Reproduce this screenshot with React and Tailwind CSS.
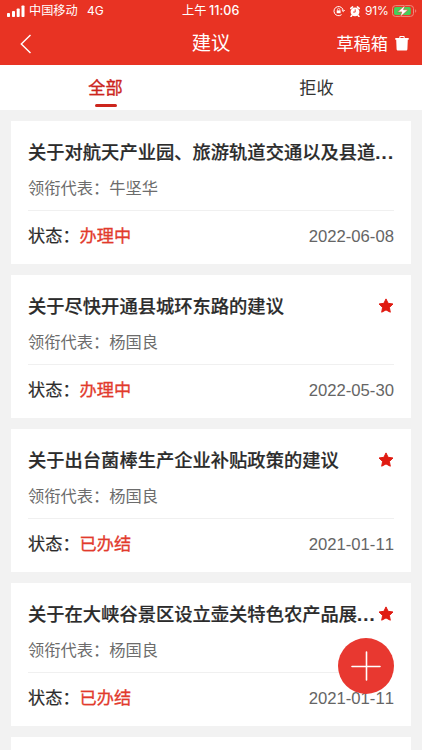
import React from "react";

const items = [
  { title: "关于对航天产业园、旅游轨道交通以及县道", cut: true, who: "牛坚华", status: "办理中", date: "2022-06-08", star: false },
  { title: "关于尽快开通县城环东路的建议", cut: false, who: "杨国良", status: "办理中", date: "2022-05-30", star: true },
  { title: "关于出台菌棒生产企业补贴政策的建议", cut: false, who: "杨国良", status: "已办结", date: "2021-01-11", star: true },
  { title: "关于在大峡谷景区设立壶关特色农产品展", cut: true, who: "杨国良", status: "已办结", date: "2021-01-11", star: true },
];

function Star() {
  return (
    <svg className="mb-[3px] ml-auto h-[15px] w-[16px] shrink-0" viewBox="0 0 16 15" fill="#e01b12" stroke="#e01b12" strokeWidth="1" strokeLinejoin="round">
      <path d="M8 .9l2.1 4.4 4.9.7-3.6 3.4.9 4.8L8 11.9l-4.3 2.3.9-4.8L1 6l4.9-.7z" />
    </svg>
  );
}

function StatusBar() {
  return (
    <div className="flex h-[22px] items-center pl-[7px] pr-[5px] text-[12px] leading-[22px]">
      <svg className="h-[12px] w-[18px]" viewBox="0 0 18 12" fill="#fff">
        <rect x="0" y="8" width="3" height="4" rx="0.8" />
        <rect x="5" y="6" width="3" height="6" rx="0.8" />
        <rect x="9.7" y="3.5" width="3" height="8.5" rx="0.8" />
        <rect x="14.5" y="0.5" width="3" height="11.5" rx="0.8" />
      </svg>
      <span className="ml-[4px] w-[58px] text-[12.2px]">中国移动</span>
      <span className="w-[94px] font-['Inter'] text-[12px]">4G</span>
      <span className="flex w-[62px] whitespace-nowrap pl-px text-[12.2px]">上午<span className="ml-[2.5px] font-['Inter'] text-[12.5px] font-medium tracking-[0.1px]">11:06</span></span>
      <div className="ml-auto flex items-center">
        <svg className="h-[12px] w-[12px]" viewBox="0 0 12 12" fill="none" stroke="#fff" strokeWidth="1">
          <path d="M8.6 9.6A4.6 4.6 0 1 1 10.2 6M8.8 5.2l1.5 1.4 1.4-1.5" />
          <rect x="3.7" y="5.4" width="3.9" height="2.8" fill="#fff" stroke="none" />
          <path d="M4.5 5.6V4.5a1.15 1.15 0 0 1 2.3 0v1.1" strokeWidth="0.7" />
        </svg>
        <svg className="ml-[5px] h-[11px] w-[10px]" viewBox="0 0 10 11">
          <path d="M.8 2.4L2.6.9M9.2 2.4L7.4.9M2 9.2l-1 1.2M8 9.2l1 1.2" stroke="#fff" strokeWidth="1.5" strokeLinecap="round" />
          <circle cx="5" cy="5.8" r="4.4" fill="#fff" />
          <path d="M5.2 3.3v2.8H3.1" fill="none" stroke="#e83323" strokeWidth="0.9" />
        </svg>
        <span className="ml-[5px] w-[24px] font-['Inter'] text-[12px] tracking-[-0.1px]">91%</span>
        <svg className="ml-[3px] h-[12px] w-[25px]" viewBox="0 0 25 12">
          <rect x="0.5" y="0.6" width="21" height="10.8" rx="3" fill="none" stroke="#f08a7f" />
          <rect x="2" y="2.1" width="16.8" height="7.8" rx="1.6" fill="#45cf5a" />
          <path d="M23.2 4.2c1.4.5 1.4 3 0 3.6z" fill="#f08a7f" />
          <path d="M13 .2L5.6 6.9h4.2L8.2 11.9l7.8-7.1h-4.5z" fill="#fff" stroke="#e83323" strokeWidth="0.5" />
        </svg>
      </div>
    </div>
  );
}

function Card({ item }) {
  return (
    <article className="h-[143px] shrink-0 bg-white px-[17px]">
      <div className="flex h-[58px] items-center pt-[5px] text-[#2b2b2b]">
        <h2 className="whitespace-nowrap text-[18.3px] font-medium leading-[26px] [-webkit-text-stroke:0.2px_#2b2b2b]">
          {item.title}
          {item.cut && <span className="font-bold tracking-[1.2px]">...</span>}
        </h2>
        {item.star && <Star />}
      </div>
      <p className="h-[32px] border-b border-[#f0f0f0] text-[16.25px] leading-[18px] text-[#6c6c6c]">领衔代表：{item.who}</p>
      <div className="flex h-[52px] items-center text-[17.2px]">
        <span className="text-[#2b2b2b] [-webkit-text-stroke:0.2px_#2b2b2b]">状态：</span>
        <span className="text-[#e23a2c] [-webkit-text-stroke:0.3px_#e23a2c]">{item.status}</span>
        <time className="ml-auto text-[16.7px] text-[#656565] [font-kerning:none]">{item.date}</time>
      </div>
    </article>
  );
}

export default function App() {
  return (
    <div className="relative flex h-[750px] w-[422px] flex-col overflow-hidden bg-[#f2f2f2] font-['Liberation_Sans','Noto_Sans_CJK_SC',sans-serif]">
      <header className="h-[65px] shrink-0 bg-[#e83323] text-white">
        <StatusBar />
        <div className="grid h-[43px] grid-cols-[1fr_auto_1fr] items-center pl-[13px] pr-[13px]">
          <svg className="ml-[7px] h-[20px] w-[12px]" viewBox="0 0 12 20" fill="none" stroke="#fff" strokeWidth="1.4">
            <path d="M10.5 1L1.3 10l9.2 9" />
          </svg>
          <h1 className="pt-[2px] text-[19.3px]">建议</h1>
          <div className="flex items-center justify-end pt-[2px] text-[17.2px]">
            草稿箱
            <svg className="mb-px ml-[7px] h-[15px] w-[14px]" viewBox="0 0 14 15" fill="#fff">
              <path d="M4.3 2V1.2C4.3.5 4.8 0 5.4 0h3.2c.6 0 1.1.5 1.1 1.2V2h3.6c.3 0 .5.2.5.5v.8c0 .3-.2.5-.5.5H.7a.5.5 0 0 1-.5-.5v-.8c0-.3.2-.5.5-.5zm1.1 0h3.2v-.9H5.4zM1.2 3.6h11.6L12.4 13.2c-.1.8-.6 1.3-1.4 1.3H3c-.8 0-1.3-.5-1.4-1.3z" />
            </svg>
          </div>
        </div>
      </header>
      <nav className="grid h-[45px] shrink-0 grid-cols-2 bg-white text-[17.2px] leading-[47px]">
        <div className="flex flex-col items-center text-[#cc251d]">
          <span className="h-[39px] [-webkit-text-stroke:0.35px_#cc251d]">全部</span>
          <span className="h-[3px] w-[22px] rounded-full bg-[#cc251d]" />
        </div>
        <div className="text-center text-[#333333]">拒收</div>
      </nav>
      <main className="flex flex-col gap-[11px] px-[11px] pt-[11px]">
        {items.map((item) => (
          <Card key={item.title} item={item} />
        ))}
        <div className="h-[143px] shrink-0 bg-white" />
      </main>
      <button className="absolute left-[338px] top-[638px] flex h-[56px] w-[56px] items-center justify-center rounded-full bg-[#e83830]" aria-label="新增">
        <svg className="h-[30px] w-[30px]" viewBox="0 0 30 30" stroke="#fff" strokeWidth="1.6" strokeLinecap="round">
          <path d="M15.5 1v28M1 15.5h28" />
        </svg>
      </button>
    </div>
  );
}
